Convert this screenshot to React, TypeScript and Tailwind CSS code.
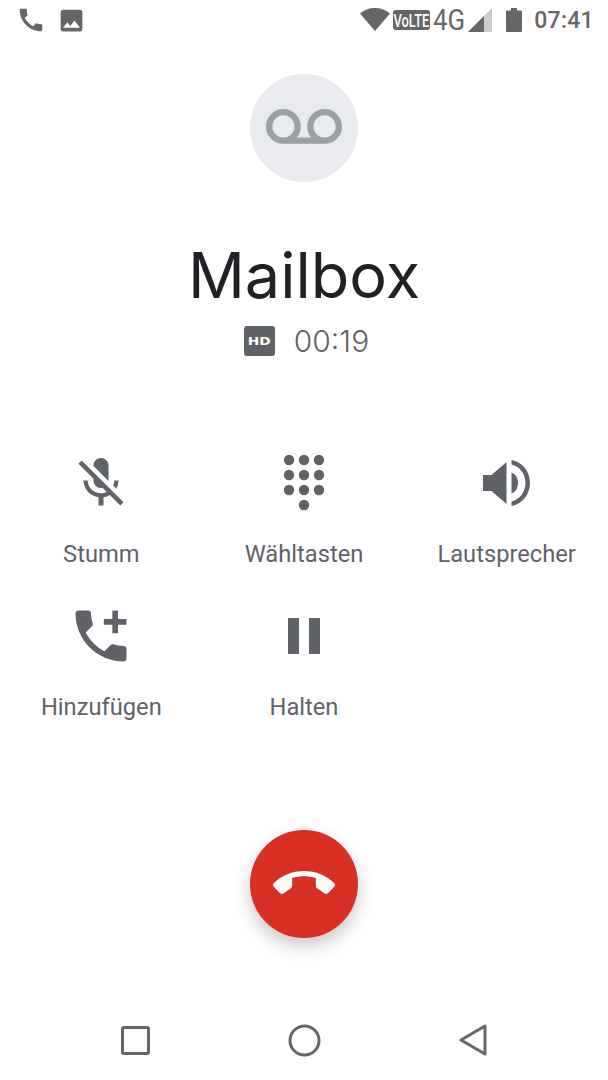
import type { ReactNode } from "react";

const phonePath =
  "M20.01 15.38c-1.23 0-2.42-.2-3.53-.56-.35-.12-.74-.03-1.01.24l-1.57 1.97c-2.83-1.35-5.48-3.9-6.89-6.83l1.95-1.66c.27-.28.35-.67.24-1.02-.37-1.11-.56-2.3-.56-3.53 0-.54-.45-.99-.99-.99H4.19C3.65 3 3 3.24 3 3.99 3 13.28 10.73 21 20.01 21c.71 0 .99-.63.99-1.18v-3.45c0-.54-.45-.99-.99-.99z";
const imagePath =
  "M21 19V5c0-1.1-.9-2-2-2H5c-1.1 0-2 .9-2 2v14c0 1.1.9 2 2 2h14c1.1 0 2-.9 2-2zM8.5 13.5l2.5 3.01L14.5 12l4.5 6H5l3.5-4.5z";
const voicemailPath =
  "M18.5 6C15.46 6 13 8.46 13 11.5c0 1.33.47 2.55 1.26 3.5H9.74c.79-.95 1.26-2.17 1.26-3.5C11 8.46 8.54 6 5.5 6S0 8.46 0 11.5 2.46 17 5.5 17h13c3.04 0 5.5-2.46 5.5-5.5S21.54 6 18.5 6zm-13 9C3.57 15 2 13.43 2 11.5S3.57 8 5.5 8 9 9.57 9 11.5 7.43 15 5.5 15zm13 0c-1.93 0-3.5-1.57-3.5-3.5S16.57 8 18.5 8 22 9.57 22 11.5 20.43 15 18.5 15z";
const micOffPath =
  "M19 11h-1.7c0 .74-.16 1.43-.43 2.05l1.23 1.23c.56-.98.9-2.09.9-3.28zm-4.02.17c0-.06.02-.11.02-.17V5c0-1.66-1.34-3-3-3S9 3.34 9 5v.18l5.98 5.99zM4.27 3L3 4.27l6.01 6.01V11c0 1.66 1.33 3 2.99 3 .22 0 .44-.03.65-.08l1.66 1.66c-.71.33-1.5.52-2.31.52-2.76 0-5.3-2.1-5.3-5.1H5c0 3.41 2.72 6.23 6 6.72V21h2v-3.28c.91-.13 1.77-.45 2.54-.9L19.73 21 21 19.73 4.27 3z";
const phoneAddPath =
  "M20 15.5c-1.25 0-2.45-.2-3.57-.57-.35-.11-.74-.03-1.02.24l-2.2 2.2c-2.83-1.44-5.15-3.75-6.59-6.59l2.2-2.21c.28-.26.36-.65.25-1C8.7 6.45 8.5 5.25 8.5 4c0-.55-.45-1-1-1H4c-.55 0-1 .45-1 1 0 9.39 7.61 17 17 17 .55 0 1-.45 1-1v-3.5c0-.55-.45-1-1-1zM21 6h-3V3h-2v3h-3v2h3v3h2V8h3V6z";
const callEndPath =
  "M12 9c-1.6 0-3.15.25-4.6.72v3.1c0 .39-.23.74-.56.9-.98.49-1.87 1.12-2.66 1.85-.18.18-.43.28-.7.28-.28 0-.53-.11-.71-.29L.29 13.08c-.18-.17-.29-.42-.29-.7 0-.28.11-.53.29-.71C3.34 8.78 7.46 7 12 7s8.66 1.78 11.71 4.67c.18.18.29.43.29.71 0 .28-.11.53-.29.71l-2.48 2.48c-.18.18-.43.29-.71.29-.27 0-.52-.11-.7-.28-.79-.74-1.69-1.36-2.67-1.85-.33-.16-.56-.5-.56-.9v-3.1C15.15 9.25 13.6 9 12 9z";

function Icon({ d, size, fill = "#5f6368" }: { d: string; size: number; fill?: string }) {
  return (
    <svg width={size} height={size} viewBox="0 0 24 24" fill={fill} className="block shrink-0">
      <path d={d} />
    </svg>
  );
}

function Dialpad() {
  const xs = [14, 29, 44];
  const ys = [11, 26, 41];
  return (
    <svg width={58} height={68} viewBox="0 0 58 68" fill="#5f6368" className="block">
      {ys.map((y) => xs.map((x) => <circle key={`${x}-${y}`} cx={x} cy={y} r={5.2} />))}
      <circle cx={29} cy={56} r={5.2} />
    </svg>
  );
}

function Speaker() {
  return (
    <svg width={48} height={48} viewBox="0 0 48 48" fill="#5f6368" className="block">
      <path d="M0 16h8.5L23.5 3v42L8.5 32H0z" />
      <path d="M28.5 13.5c3.8 1.4 6.5 5.400 6.500 10.500s-2.700 9.100-6.500 10.500z" />
      <path d="M28.500 1c10.600 1.700 18.500 11.500 18.500 23s-7.900 21.300-18.500 23v-4.600c8-1.700 14-9.500 14-18.400s-6-16.700-14-18.400z" />
    </svg>
  );
}

function Pause() {
  return (
    <svg width={32} height={36} viewBox="0 0 32 36" fill="#5f6368" className="block">
      <rect x={0} y={0} width={11} height={36} />
      <rect x={21} y={0} width={11} height={36} />
    </svg>
  );
}

function Action({ icon, label }: { icon: ReactNode; label: string }) {
  return (
    <div className="flex h-[153px] flex-col items-center">
      <div className="flex h-[68px] w-full items-center justify-center">{icon}</div>
      <div className="mt-[22px] text-[23.7px] leading-[30px] text-[#5f6368]">{label}</div>
    </div>
  );
}

function StatusBar() {
  return (
    <div className="flex h-[40px] items-center justify-between pr-[14px] pl-[16px] text-[#666]">
      <div className="flex items-center gap-[11px]">
        <Icon d={phonePath} size={30} fill="#666" />
        <Icon d={imagePath} size={29} fill="#666" />
      </div>
      <div className="flex items-center">
        <svg width={30} height={24} viewBox="0 0 30 24" fill="#666" className="block -translate-y-px">
          <path d="M0 6.500C4 3 9 1 15 1s11 2 15 5.500L15 24z" />
        </svg>
        <div className="ml-[3px] flex h-[20px] w-[37px] items-center justify-center overflow-hidden rounded-[3px] bg-[#666]">
          <span className="scale-x-[0.68] text-[19px] leading-none font-medium whitespace-nowrap text-white">VoLTE</span>
        </div>
        <div className="ml-[3px] w-[31px] overflow-visible">
          <span className="block origin-left scale-x-[0.86] text-[30px] leading-[30px] font-normal whitespace-nowrap">4G</span>
        </div>
        <svg width={24} height={24} viewBox="0 0 24 24" className="ml-[4px] block">
          <path d="M0 24L24 0v24z" fill="#ccc" />
          <path d="M0 24L16 8v16z" fill="#666" />
        </svg>
        <svg width={16} height={24} viewBox="0 0 16 24" fill="#666" className="ml-[14px] block">
          <path d="M5 0h6v2.500h4a1 1 0 0 1 1 1V23a1 1 0 0 1-1 1H1a1 1 0 0 1-1-1V3.500a1 1 0 0 1 1-1h4z" />
        </svg>
        <span className="ml-[12px] text-[23px] leading-none font-medium tracking-[0.3px]">07:41</span>
      </div>
    </div>
  );
}

export default function App() {
  return (
    <div className="flex h-[1080px] w-[608px] flex-col overflow-hidden bg-white font-['Roboto',sans-serif]">
      <StatusBar />

      <div className="mx-auto mt-[34px] flex size-[108px] items-center justify-center rounded-full bg-[#e8eaed]">
        <Icon d={voicemailPath} size={76} fill="#9aa0a6" />
      </div>

      <div className="mt-[53px] text-center font-['Inter',sans-serif] text-[63px] leading-[80px] text-[#202124]">
        Mailbox
      </div>

      <div className="mt-[6px] flex h-[40px] items-center justify-center gap-[19px] pl-[5px]">
        <div className="flex h-[30px] w-[31px] items-center justify-center rounded-[3px] bg-[#5f6368] font-['DejaVu_Sans',sans-serif] text-[11px] leading-none font-bold text-white">
          <span className="scale-x-[1.25]">HD</span>
        </div>
        <span className="font-['Inter',sans-serif] text-[30px] leading-none font-light text-[#5f6368]">00:19</span>
      </div>

      <div className="mt-[88px] grid grid-cols-3">
        <Action icon={<Icon d={micOffPath} size={60} />} label="Stumm" />
        <Action icon={<Dialpad />} label="Wähltasten" />
        <Action icon={<Speaker />} label="Lautsprecher" />
        <Action icon={<Icon d={phoneAddPath} size={68} />} label="Hinzufügen" />
        <Action icon={<Pause />} label="Halten" />
      </div>

      <div className="mx-auto mt-[75px] flex size-[108px] items-center justify-center rounded-full bg-[#d93025] shadow-[0_8px_18px_rgba(0,0,0,0.22)]">
        <Icon d={callEndPath} size={62} fill="#fff" />
      </div>

      <div className="mt-[85px] flex h-[34px] items-center justify-between pr-[121px] pl-[121px]">
        <svg width={29} height={29} viewBox="0 0 29 29" className="block">
          <rect x={1.500} y={1.500} width={26} height={26} rx={1.500} fill="none" stroke="#666" strokeWidth={3} />
        </svg>
        <svg width={33} height={33} viewBox="0 0 33 33" className="block">
          <circle cx={16.500} cy={16.500} r={14.500} fill="none" stroke="#666" strokeWidth={3} />
        </svg>
        <svg width={28} height={32} viewBox="0 0 28 32" className="block">
          <path d="M26 2v28L2 16z" fill="none" stroke="#666" strokeWidth={3} strokeLinejoin="round" />
        </svg>
      </div>
    </div>
  );
}
